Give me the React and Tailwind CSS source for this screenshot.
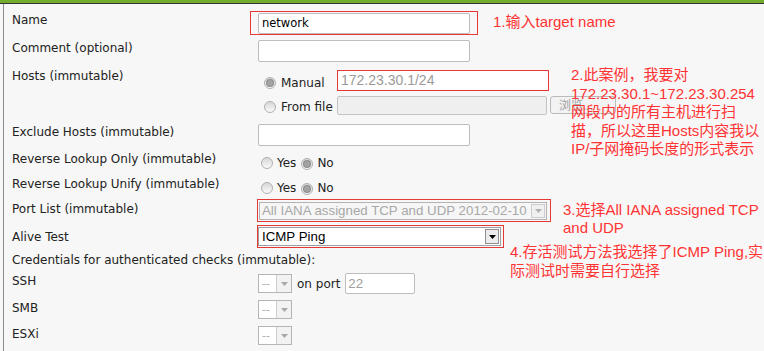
import React from "react";

// small drop-down caret
function Caret({ color = "#000" }) {
  return (
    <svg width="7" height="4" viewBox="0 0 7 4">
      <path d="M0 0h7L3.5 4z" fill={color} />
    </svg>
  );
}

function Radio({ checked }) {
  return (
    <span className="inline-flex w-[12px] h-[12px] shrink-0 items-center justify-center rounded-full border border-[#b0b0b0] bg-linear-to-b from-[#d6d6d6] to-[#fbfbfb]">
      {checked && <span className="w-[6px] h-[6px] rounded-full bg-[#a3a3a3] ring-1 ring-[#8c8c8c]" />}
    </span>
  );
}

function SmallSelect() {
  return (
    <div className="flex w-[34px] h-[19px] border border-[#b5b5b5] bg-white">
      <span className="flex-1 pl-[3px] text-[11px] leading-[17px] text-[#aaa]">--</span>
      <span className="flex w-[15px] items-center justify-center border-l border-[#cfcfcf] bg-[#f2f2f2]">
        <Caret color="#a8a8a8" />
      </span>
    </div>
  );
}

function Row({ h, lpt, fpt, label, children }) {
  return (
    <div className={`flex ${h}`}>
      <div className={`w-[246px] shrink-0 whitespace-nowrap leading-[14px] ${lpt}`}>{label}</div>
      <div className={`flex-1 ${fpt}`}>{children}</div>
    </div>
  );
}

export default function App() {
  return (
    <div className="relative w-[764px] h-[351px] overflow-hidden bg-[#f7f7f7] font-['DejaVu_Sans',sans-serif] text-[12px] text-[#222]">
      <div className="h-[3px] bg-[#74ad2b]" />
      <div className="h-px bg-[#333]" />

      <div className="ml-[3px] h-[347px] border-l border-[#8c8c8c] pl-[8px] pt-[6px]">
        {/* NAME */}
        <Row h="h-[27px]" lpt="pt-[3px]" fpt="pt-[3px]" label="Name">
          <div className="flex w-[212px] h-[21px] items-center rounded-[2px] border border-[#bdbdbd] bg-white px-[3px] text-[11.5px] text-black">
            network
          </div>
        </Row>

        {/* COMMENT */}
        <Row h="h-[27px]" lpt="pt-[4px]" fpt="pt-[3px]" label="Comment (optional)">
          <div className="w-[212px] h-[22px] rounded-[2px] border border-[#bdbdbd] bg-white" />
        </Row>

        {/* HOSTS */}
        <Row h="h-[57px]" lpt="pt-[5px]" fpt="pt-[6px]" label="Hosts (immutable)">
          <div className="flex h-[21px]">
            <div className="flex h-[14px] items-center pt-0 mt-[6px] ml-[6px]">
              <Radio checked />
              <span className="ml-[5px] w-[56px] leading-[14px]">Manual</span>
            </div>
            <div className="flex w-[212px] h-[21px] items-center border border-[#e53935] bg-white px-[3px] font-['Liberation_Sans',sans-serif] text-[14px] text-[#9a9a9a]">
              172.23.30.1/24
            </div>
          </div>
          <div className="mt-[5px] flex h-[19px]">
            <div className="flex h-[14px] items-center mt-[4px] ml-[6px]">
              <Radio />
              <span className="ml-[5px] w-[56px] leading-[14px]">From file</span>
            </div>
            <div className="w-[210px] h-[19px] rounded-[2px] border border-[#c4c4c4] bg-[#efefef]" />
            <div className="ml-[3px] flex w-[66px] h-[18px] items-center rounded-[3px] border border-[#bababa] bg-[#f3f3f3] pl-[8px] font-['Noto_Sans_CJK_SC',sans-serif] text-[12px] text-[#a0a0a0]">
              浏览...
            </div>
          </div>
        </Row>

        {/* EXCLUDE */}
        <Row h="h-[27px]" lpt="pt-[4px]" fpt="pt-[3px]" label="Exclude Hosts (immutable)">
          <div className="w-[212px] h-[22px] rounded-[2px] border border-[#bdbdbd] bg-white" />
        </Row>

        {/* REVERSE LOOKUP ONLY */}
        <Row h="h-[26px]" lpt="pt-[4px]" fpt="pt-[8px]" label="Reverse Lookup Only (immutable)">
          <div className="flex h-[14px] items-center ml-[3px]">
            <Radio />
            <span className="ml-[4px]">Yes</span>
            <span className="ml-[5px]"><Radio checked /></span>
            <span className="ml-[4px]">No</span>
          </div>
        </Row>

        {/* REVERSE LOOKUP UNIFY */}
        <Row h="h-[26px]" lpt="pt-[3px]" fpt="pt-[7px]" label="Reverse Lookup Unify (immutable)">
          <div className="flex h-[14px] items-center ml-[3px]">
            <Radio />
            <span className="ml-[4px]">Yes</span>
            <span className="ml-[5px]"><Radio checked /></span>
            <span className="ml-[4px]">No</span>
          </div>
        </Row>

        {/* PORT LIST */}
        <Row h="h-[24px]" lpt="pt-[2px]" fpt="pt-[2px]" label="Port List (immutable)">
          <div className="ml-[1px] flex w-[288px] h-[18px] border border-[#b3b3b3] bg-[#f6f6f6]">
            <span className="flex-1 pl-[2px] font-['Liberation_Sans',sans-serif] text-[13.3px] leading-[16px] text-[#a8a8a8]">
              All IANA assigned TCP and UDP 2012-02-10
            </span>
            <span className="m-px flex w-[14px] items-center justify-center border border-[#cdcdcd] bg-[#f0f0f0]">
              <Caret color="#b0b0b0" />
            </span>
          </div>
        </Row>

        {/* ALIVE TEST */}
        <Row h="h-[25px]" lpt="pt-[6px]" fpt="pt-[3px]" label="Alive Test">
          <div className="flex w-[243px] h-[19px] border border-[#a0a0a0] bg-white">
            <span className="flex-1 pl-[3px] font-['Liberation_Sans',sans-serif] text-[13.3px] leading-[17px] text-black">
              ICMP Ping
            </span>
            <span className="m-px flex w-[14px] items-center justify-center border border-[#8f8f8f] bg-[#ececec]">
              <Caret />
            </span>
          </div>
        </Row>

        {/* CREDENTIALS */}
        <Row h="h-[21px]" lpt="pt-[4px]" fpt="" label="Credentials for authenticated checks (immutable):" />

        {/* SSH */}
        <Row h="h-[27px]" lpt="pt-[4px]" fpt="pt-[3px]" label="SSH">
          <div className="flex h-[21px] items-center">
            <SmallSelect />
            <span className="ml-[5px]">on port</span>
            <div className="ml-[5px] flex w-[70px] h-[21px] items-center rounded-[2px] border border-[#bdbdbd] bg-white pl-[2px] font-['Liberation_Sans',sans-serif] text-[13.3px] text-[#a0a0a0]">
              22
            </div>
          </div>
        </Row>

        {/* SMB */}
        <Row h="h-[26px]" lpt="pt-[4px]" fpt="pt-[3px]" label="SMB">
          <SmallSelect />
        </Row>

        {/* ESXI */}
        <Row h="h-[28px]" lpt="pt-[4px]" fpt="pt-[3px]" label="ESXi">
          <SmallSelect />
        </Row>
      </div>

      {/* annotation boxes */}
      <div className="absolute left-[250px] top-[11px] w-[228px] h-[24px] border border-[#e53935]" />
      <div className="absolute left-[257px] top-[199px] w-[294px] h-[23px] border border-[#e53935]" />
      <div className="absolute left-[257px] top-[225px] w-[247px] h-[23px] border border-[#e53935]" />

      {/* annotation notes */}
      <div className="absolute inset-0 font-['Liberation_Sans','Noto_Sans_CJK_SC',sans-serif] text-[15px] text-[#ff3333] whitespace-nowrap">
        <div className="absolute left-[493px] top-[13px] leading-[18px]">1.输入target name</div>
        <div className="absolute left-[571px] top-[66px] leading-[18.5px]">
          <div>2.此案例，我要对</div>
          <div>172.23.30.1~172.23.30.254</div>
          <div>网段内的所有主机进行扫</div>
          <div>描，所以这里Hosts内容我以</div>
          <div>IP/子网掩码长度的形式表示</div>
        </div>
        <div className="absolute left-[563px] top-[201px] leading-[18px]">
          <div>3.选择All IANA assigned TCP</div>
          <div>and UDP</div>
        </div>
        <div className="absolute left-[510px] top-[242px] leading-[19px]">
          <div>4.存活测试方法我选择了ICMP Ping,实</div>
          <div>际测试时需要自行选择</div>
        </div>
      </div>
    </div>
  );
}
